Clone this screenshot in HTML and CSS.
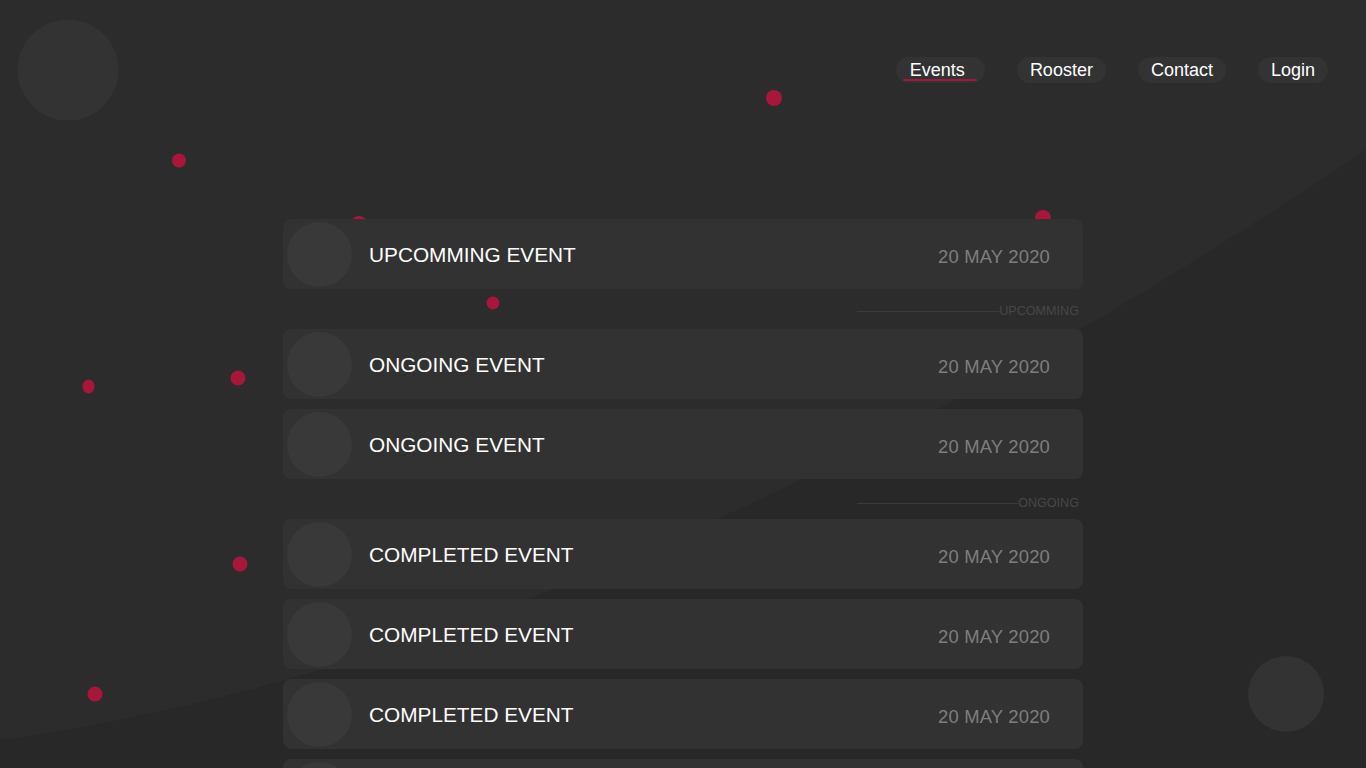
FILE: index.html
```html
<!DOCTYPE html>
<html lang="en">
<head>
<meta charset="utf-8">
<title>Events</title>
<link rel="stylesheet" href="styles.css">
</head>
<body>
<svg class="backdrop" width="1366" height="768" viewBox="0 0 1366 768" aria-hidden="true">
  <path class="shade" d="M0,740 Q611,656 1366,150 L1366,768 L0,768 Z"/>
  <circle class="blob" cx="68" cy="70" r="50.5"/>
  <circle class="blob" cx="1286" cy="694" r="38"/>
  <circle class="dot" cx="179" cy="160.5" r="7"/>
  <circle class="dot" cx="774" cy="98" r="8"/>
  <circle class="dot" cx="359" cy="224" r="8"/>
  <circle class="dot" cx="1043" cy="218" r="8"/>
  <circle class="dot" cx="493" cy="303" r="6.5"/>
  <ellipse class="dot" cx="88.5" cy="386.5" rx="6" ry="7"/>
  <circle class="dot" cx="238" cy="378" r="7.5"/>
  <circle class="dot" cx="240" cy="564" r="7.5"/>
  <circle class="dot" cx="95" cy="694" r="7.5"/>
</svg>

<header class="top">
  <nav class="nav">
    <a class="pill pill-active" href="#">Events</a>
    <a class="pill" href="#">Rooster</a>
    <a class="pill" href="#">Contact</a>
    <a class="pill" href="#">Login</a>
  </nav>
</header>

<main class="list">
  <div class="card"><span class="thumb"></span><span class="title">UPCOMMING EVENT</span><span class="date">20 MAY 2020</span></div>
  <div class="sep"><div class="sep-inner"><span class="sep-line"></span><span class="sep-label">UPCOMMING</span></div></div>
  <div class="card"><span class="thumb"></span><span class="title">ONGOING EVENT</span><span class="date">20 MAY 2020</span></div>
  <div class="card"><span class="thumb"></span><span class="title">ONGOING EVENT</span><span class="date">20 MAY 2020</span></div>
  <div class="sep sep-low"><div class="sep-inner"><span class="sep-line"></span><span class="sep-label">ONGOING</span></div></div>
  <div class="card"><span class="thumb"></span><span class="title">COMPLETED EVENT</span><span class="date">20 MAY 2020</span></div>
  <div class="card"><span class="thumb"></span><span class="title">COMPLETED EVENT</span><span class="date">20 MAY 2020</span></div>
  <div class="card"><span class="thumb"></span><span class="title">COMPLETED EVENT</span><span class="date">20 MAY 2020</span></div>
  <div class="card"><span class="thumb"></span><span class="title">COMPLETED EVENT</span><span class="date">20 MAY 2020</span></div>
</main>
</body>
</html>
```

FILE: styles.css
```css
html, body {
  margin: 0;
  padding: 0;
  height: 100%;
  overflow: hidden;
}

body {
  background: #2c2c2c;
  font-family: "Liberation Sans", Arial, sans-serif;
  color: #ffffff;
  position: relative;
}

.backdrop {
  position: absolute;
  left: 0;
  top: 0;
  z-index: 0;
  display: block;
}

.shade { fill: #282828; }
.blob { fill: #333333; }
.dot { fill: #a8173b; }

.top {
  position: relative;
  z-index: 1;
  display: flex;
  justify-content: flex-end;
  padding: 57px 38px 0 0;
}

.nav {
  display: flex;
  gap: 32px;
}

.pill {
  position: relative;
  display: flex;
  align-items: center;
  height: 26px;
  padding: 0 13px;
  border-radius: 13px;
  background: #333333;
  color: #ffffff;
  text-decoration: none;
  font-size: 18px;
  line-height: 26px;
}

.pill-active {
  padding: 0 20px 0 14px;
}

.pill-active::after {
  content: "";
  position: absolute;
  left: 7px;
  right: 8px;
  bottom: 2px;
  height: 2px;
  border-radius: 1px;
  background: #9e1a3a;
}

.list {
  position: relative;
  z-index: 1;
  width: 800px;
  margin: 136px auto 0;
  display: flex;
  flex-direction: column;
  gap: 10px;
}

.card {
  display: flex;
  align-items: center;
  height: 70px;
  box-sizing: border-box;
  padding: 0 33px 0 4px;
  border-radius: 8px;
  background: #323232;
  flex-shrink: 0;
}

.thumb {
  width: 65px;
  height: 65px;
  border-radius: 50%;
  background: #393939;
  flex-shrink: 0;
}

.title {
  margin-left: 17px;
  margin-top: 2px;
  font-size: 20.8px;
  color: #ffffff;
}

.date {
  margin-left: auto;
  margin-top: 6px;
  font-size: 18.4px;
  letter-spacing: 0.2px;
  color: #7e7e7e;
}

.sep {
  height: 20px;
  box-sizing: border-box;
  padding: 5px 4px 0 0;
  display: flex;
  justify-content: flex-end;
}

.sep-low {
  padding-top: 7px;
}

.sep-inner {
  width: 222px;
  height: 15px;
  display: flex;
  align-items: center;
}

.sep-line {
  flex: 1;
  height: 1px;
  background: #3a3a3a;
}

.sep-label {
  font-size: 12.6px;
  line-height: 15px;
  color: #474747;
}
```
